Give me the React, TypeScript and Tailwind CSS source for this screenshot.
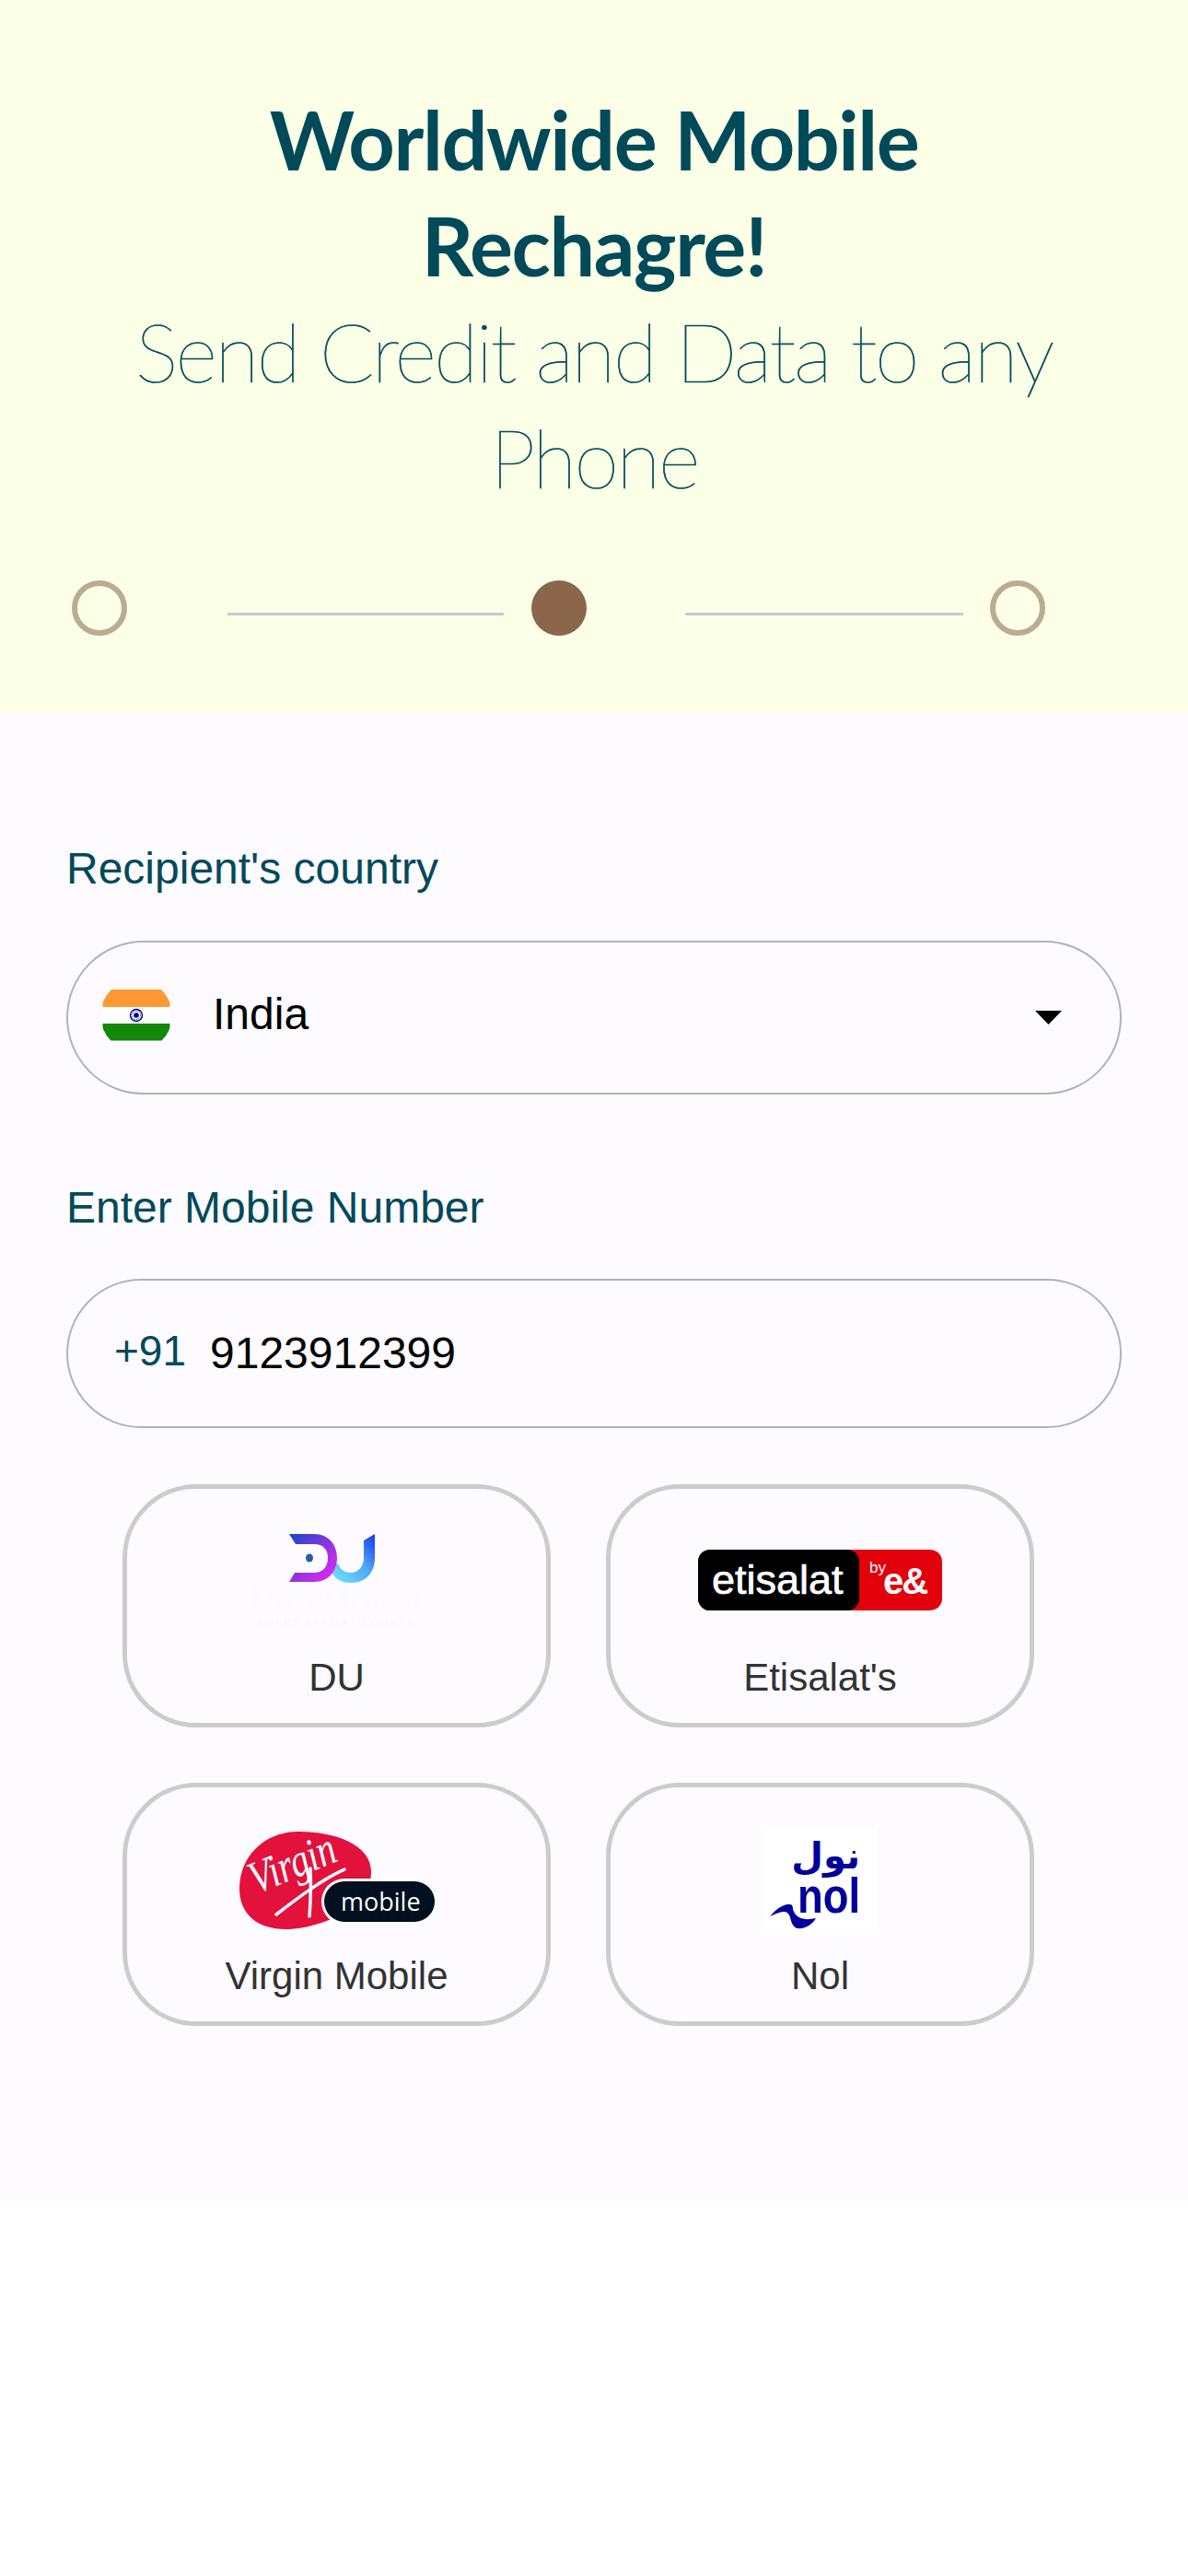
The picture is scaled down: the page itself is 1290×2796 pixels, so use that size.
import { ReactNode } from "react";

const sans = "font-['Liberation_Sans',Arial,sans-serif]";

function FlagIndia() {
    return (
        <svg width="84" height="84" viewBox="0 0 84 84" className="shrink-0 -mt-[6px]">
            <defs>
                <clipPath id="flag-clip">
                    <circle cx="42" cy="42" r="39" />
                </clipPath>
            </defs>
            <g clipPath="url(#flag-clip)">
                <rect x="5.5" y="14" width="73" height="19" fill="#ff9933" />
                <rect x="5.5" y="33" width="73" height="18" fill="#ffffff" />
                <rect x="5.5" y="51" width="73" height="18.5" fill="#138808" />
            </g>
            <circle cx="42" cy="42" r="6.5" fill="none" stroke="#000080" strokeWidth="1.4" />
            <circle cx="42" cy="42" r="2.8" fill="#000080" />
            <circle cx="42" cy="42" r="4.6" fill="none" stroke="#000080" strokeWidth="1" strokeDasharray="1 1" />
        </svg>
    );
}

function DuLogo() {
    return (
        <svg width="190" height="112" viewBox="0 0 190 112">
            <defs>
                <linearGradient id="du-d" x1="0" y1="0" x2="1" y2="1">
                    <stop offset="0" stopColor="#1148c8" />
                    <stop offset="0.55" stopColor="#9a32e0" />
                    <stop offset="1" stopColor="#ee2bf0" />
                </linearGradient>
                <linearGradient id="du-u" x1="0" y1="1" x2="1" y2="0">
                    <stop offset="0" stopColor="#72e8ff" />
                    <stop offset="0.55" stopColor="#52a8f4" />
                    <stop offset="1" stopColor="#1438f0" />
                </linearGradient>
            </defs>
            <path d="M88 36 C90 48 98 53 110 53 C126 53 136 42 136 26 V0 L124 7 V26 C124 35 118 42 110 42 C103 42 98 38 96 32 Z" fill="url(#du-u)" />
            <path d="M43 0 H70 C86 0 95 12 95 26 C95 40 86 52 70 52 H43 L49 42 H70 C80 42 85 35 85 26 C85 17 80 11 70 11 H50 Z" fill="url(#du-d)" />
            <ellipse cx="65" cy="26" rx="4" ry="4.5" fill="#1f62a8" />
            <text x="95" y="82" textAnchor="middle" fontFamily="Liberation Sans, sans-serif" fontWeight="700" fontSize="36" fill="#fbfafe" letterSpacing="1">DataUnion</text>
            <text x="95" y="100" textAnchor="middle" fontFamily="Liberation Sans, sans-serif" fontSize="11" fill="#f8f7fb" letterSpacing="2">EVERY EFFORT COUNTS</text>
        </svg>
    );
}

function EtisalatLogo() {
    return (
        <svg width="265" height="66" viewBox="0 0 265 66">
            <rect x="0" y="0" width="265" height="66" rx="13" fill="#e2000b" />
            <rect x="0" y="0" width="175" height="66" rx="13" fill="#000000" />
            <text x="15" y="48" fontFamily="Liberation Sans, sans-serif" fontSize="45" stroke="#ffffff" strokeWidth="0.7" fill="#ffffff">etisalat</text>
            <text x="186" y="25" fontFamily="Liberation Sans, sans-serif" fontSize="17" fill="#ffffff">by</text>
            <text x="201" y="48" fontFamily="Liberation Sans, sans-serif" fontSize="40" fontWeight="700" fill="#ffffff" letterSpacing="-2">e&amp;</text>
        </svg>
    );
}

function VirginLogo() {
    return (
        <svg width="212" height="106" viewBox="0 0 212 106">
            <path d="M64 0 C104 0 143 14 143 44 C143 60 136 70 128 80 C104 96 74 106 50 106 C20 106 0 90 0 62 C0 26 28 0 64 0 Z" fill="#e2123c" />
            <text fontFamily="Liberation Serif, serif" fontStyle="italic" fontSize="40" fill="#ffffff" transform="rotate(-22 18 68) translate(18 68) scale(1 1.25)">Virgin</text>
            <path d="M40 90 C66 70 90 52 114 41" fill="none" stroke="#ffffff" strokeWidth="3.5" strokeLinecap="round" />
            <path d="M77 40 C78 60 77 78 76 92" fill="none" stroke="#ffffff" strokeWidth="3.5" strokeLinecap="round" />
            <rect x="89" y="51" width="123" height="50" rx="25" fill="#ffffff" />
            <rect x="92" y="54" width="120" height="44" rx="22" fill="#00101e" />
            <text x="110" y="86" fontFamily="Open Sans, sans-serif" fontSize="27" fontWeight="500" fill="#ffffff">mobile</text>
        </svg>
    );
}

function NolLogo() {
    return (
        <svg width="125" height="116" viewBox="0 0 125 116">
            <rect width="125" height="116" fill="#ffffff" />
            <text x="106" y="45" textAnchor="start" direction="rtl" fontFamily="DejaVu Sans, sans-serif" fontWeight="700" fontSize="40" fill="#00009c">نول</text>
            <text x="38" y="93" fontFamily="Liberation Sans, sans-serif" fontWeight="700" fontSize="54" fill="#00009c" textLength="68" lengthAdjust="spacingAndGlyphs">nol</text>
            <path d="M8 97 C14 90 22 83 30 84 C34 85 32 88 34 92 C37 99 46 102 58 99 C54 106 46 111 38 110 C33 109 31 103 30 98 C28 92 24 91 18 93 C14 94 11 96 8 97 Z" fill="#00009c" />
        </svg>
    );
}

type CardProps = {
    logo: ReactNode,
    label: string,
    logoBoxClass: string,
}

function OperatorCard({ logo, label, logoBoxClass }: CardProps) {
    return (
        <div className="h-[264px] rounded-[80px] border-[5px] border-[#cccccc] flex flex-col items-center">
            <div className={logoBoxClass}>{logo}</div>
            <p className={`${sans} text-[42px] leading-[48px] text-[#333333]`}>{label}</p>
        </div>
    );
}

export default function App() {
    return (
        <div className="bg-white min-h-[2796px]">
            <div className="bg-[#fbffe6] h-[773px] pt-[94px] text-[#004a5a] text-center">
                <h1 className="font-['Lato',sans-serif] font-bold text-[88px] leading-[115px] tracking-[-1.4px] mx-auto w-[900px]">
                    Worldwide Mobile Rechagre!
                </h1>
                <p className="font-['Lato',sans-serif] font-thin text-[88px] leading-[115px] tracking-[-2.5px] text-[#004a5a] [-webkit-text-stroke:0.7px_#004a5a] mx-auto w-[1100px]">
                    Send Credit and Data to any Phone
                </p>
                <div className="flex items-start pl-[78px] mt-[76px]">
                    <div className="w-[60px] h-[60px] rounded-full border-[6px] border-[#bcab92]" />
                    <div className="ml-[109px] mt-[35px] w-[300px] h-[3px] bg-[#c8c9d3]" />
                    <div className="ml-[30px] w-[60px] h-[60px] rounded-full bg-[#8b664c]" />
                    <div className="ml-[107px] mt-[35px] w-[302px] h-[3px] bg-[#c8c9d3]" />
                    <div className="ml-[29px] w-[60px] h-[60px] rounded-full border-[6px] border-[#bcab92]" />
                </div>
            </div>
            <div className={`bg-[#fdfbff] h-[1615px] ${sans}`}>
                <div className="px-[72px] pt-[142px]">
                    <p className="text-[48px] leading-[56px] text-[#004a5a]">Recipient's country</p>
                    <div className="mt-[50px] h-[167px] rounded-[84px] border-2 border-[#b3b3b3] flex items-center pl-[32px] pr-[63px]">
                        <FlagIndia />
                        <span className="ml-[41px] text-[48px] leading-[56px] text-black -mt-[8px]">India</span>
                        <svg width="29" height="15" viewBox="0 0 29 15" className="ml-auto">
                            <path d="M0 0 H29 L14.5 15 Z" fill="#000000" />
                        </svg>
                    </div>
                    <p className="mt-[95px] text-[48px] leading-[56px] text-[#004a5a]">Enter Mobile Number</p>
                    <div className="mt-[49px] h-[162px] rounded-[81px] border-2 border-[#b3b3b3] flex items-center pl-[50px]">
                        <span className="text-[46px] leading-[52px] text-[#004a5a] -mt-[6px]">+91</span>
                        <span className="ml-[26px] text-[48px] leading-[56px] text-black">9123912399</span>
                    </div>
                </div>
                <div className="grid grid-cols-[465px_465px] gap-x-[60px] gap-y-[60px] pl-[133px] mt-[61px]">
                    <OperatorCard logo={<DuLogo />} label="DU" logoBoxClass="mt-[49px] h-[132px]" />
                    <OperatorCard logo={<EtisalatLogo />} label="Etisalat's" logoBoxClass="mt-[66px] h-[115px]" />
                    <OperatorCard logo={<VirginLogo />} label="Virgin Mobile" logoBoxClass="mt-[48px] h-[133px]" />
                    <OperatorCard logo={<NolLogo />} label="Nol" logoBoxClass="mt-[43px] h-[138px]" />
                </div>
            </div>
        </div>
    );
}
